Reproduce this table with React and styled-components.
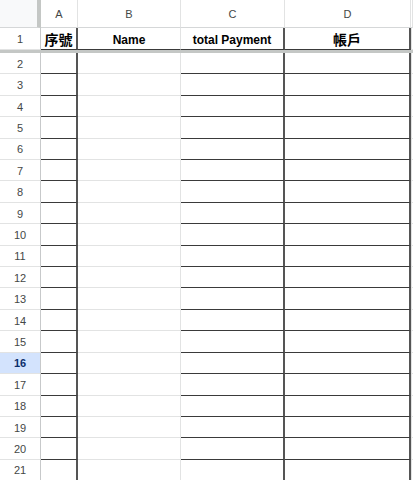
import styled, { createGlobalStyle } from "styled-components";

const GlobalStyle = createGlobalStyle`
  html, body {
    margin: 0;
    padding: 0;
    background: #ffffff;
  }
  body {
    font-family: "Liberation Sans", Arial, sans-serif;
    overflow: hidden;
  }
`;

const columns = ["A", "B", "C", "D"];
const headers = [
  { text: "序號", cjk: true },
  { text: "Name" },
  { text: "total Payment" },
  { text: "帳戶", cjk: true },
];
const rows = Array.from({ length: 20 }, (_, i) => i + 2);
const selectedRow = 16;

const DARK = "#3a3a3a";
const GRID = "#e2e3e3";

const Sheet = styled.div`
  display: grid;
  grid-template-columns: 41px 37px 103px 104px 126px 1fr;
  grid-template-rows: 28px 22px 3px;
  grid-auto-rows: 21.42px;
  width: 413px;
  height: 480px;
  overflow: hidden;
`;

const Corner = styled.div`
  background: #f8f9fa;
  border-right: 4px solid #c4c7c5;
  border-bottom: 1px solid #d5d7d8;
  box-sizing: border-box;
`;

const ColHeader = styled.div`
  display: flex;
  align-items: center;
  justify-content: center;
  background: #ffffff;
  border-right: 1px solid ${GRID};
  border-bottom: 1px solid #d5d7d8;
  box-sizing: border-box;
  color: #444746;
  font-size: 11px;
`;

const RowHeader = styled.div`
  display: flex;
  align-items: center;
  justify-content: center;
  background: ${(p) => (p.$selected ? "#d3e3fd" : "#ffffff")};
  border-right: 1px solid #c7c9ca;
  border-bottom: 1px solid ${GRID};
  box-sizing: border-box;
  color: ${(p) => (p.$selected ? "#0b2e6b" : "#444746")};
  font-weight: ${(p) => (p.$selected ? 700 : 400)};
  font-size: 11px;
  padding-top: 1px;
`;

const TitleCell = styled.div`
  display: flex;
  align-items: flex-end;
  justify-content: center;
  padding-bottom: 3px;
  border-right: ${(p) => (p.$dark ? `2px solid #555` : `1px solid ${GRID}`)};
  border-bottom: 1px solid ${DARK};
  box-sizing: border-box;
  color: #000000;
  font-weight: 700;
  font-size: ${(p) => (p.$cjk ? "14px" : "12px")};
  font-family: ${(p) =>
    p.$cjk
      ? `"Noto Sans CJK TC", "Noto Sans CJK SC", sans-serif`
      : `"Liberation Sans", Arial, sans-serif`};
  line-height: 1;
  white-space: nowrap;
`;

const Freeze = styled.div`
  grid-column: 1 / -1;
  background: #c4c7c5;
`;

const Cell = styled.div`
  box-sizing: border-box;
  background: #ffffff;
  border-right: ${(p) => (p.$dark ? `2px solid #555` : `1px solid ${GRID}`)};
  border-bottom: ${(p) => (p.$boxed ? `1px solid ${DARK}` : `1px solid ${GRID}`)};
  box-shadow: ${(p) => (p.$boxed ? `0 1px 0 ${GRID}` : "none")};
`;

const Spare = styled.div`
  box-sizing: border-box;
  border-bottom: 1px solid ${GRID};
  border-left: 1px solid ${GRID};
`;

// column A, C and D have black cell borders, B only has gridlines
const cellProps = (col) => ({
  $dark: col === "A" || col === "C" || col === "D",
  $boxed: col !== "B",
});

export default function App() {
  return (
    <>
      <GlobalStyle />
      <Sheet>
        <Corner />
        {columns.map((c) => (
          <ColHeader key={c}>{c}</ColHeader>
        ))}
        <ColHeader />

        <RowHeader>1</RowHeader>
        {headers.map((h, i) => (
          <TitleCell key={h.text} $cjk={h.cjk} $dark={columns[i] !== "B"}>
            {h.text}
          </TitleCell>
        ))}
        <Spare />

        <Freeze />

        {rows.map((r) => (
          <Row key={r} n={r} />
        ))}
      </Sheet>
    </>
  );
}

const Row = ({ n }) => (
  <>
    <RowHeader $selected={n === selectedRow}>{n}</RowHeader>
    {columns.map((c) => (
      <Cell key={c} {...cellProps(c)} />
    ))}
    <Spare />
  </>
);
